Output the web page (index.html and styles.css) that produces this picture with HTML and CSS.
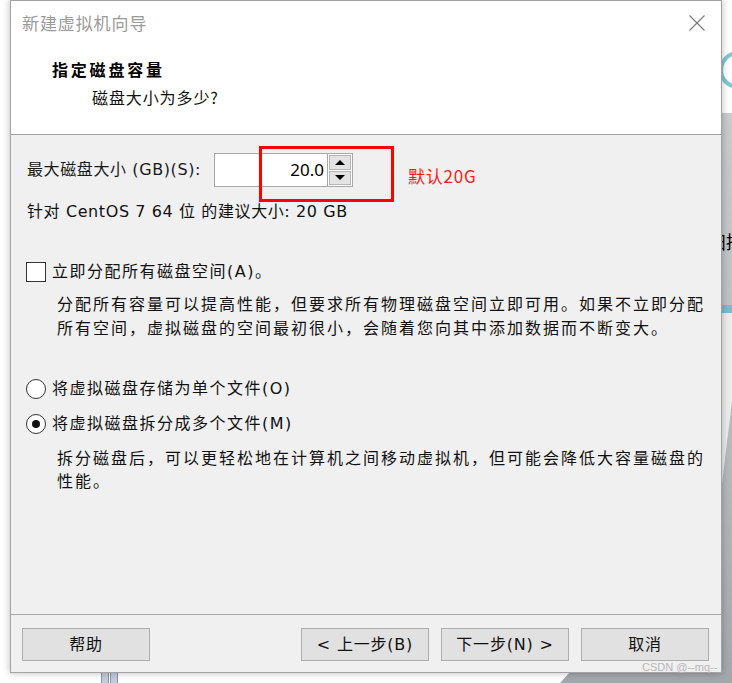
FILE: index.html
```html
<!DOCTYPE html>
<html lang="zh-CN">
<head>
<meta charset="utf-8">
<title>新建虚拟机向导</title>
<link rel="stylesheet" href="styles.css">
</head>
<body>
<div class="desktop">
  <div class="ring"></div>
  <div class="side-strip">
    <div class="side-band"></div>
    <div class="side-wedge"></div>
  </div>
  <div class="side-text">扫描</div>
  <div class="taskbar-bars"><span></span><span></span></div>
  <div class="corner-shade"></div>

  <div class="dialog">
    <header class="dlg-header">
      <div class="title-row">
        <span class="title">新建虚拟机向导</span>
        <svg class="close" width="16" height="16" viewBox="0 0 16 16"><path d="M0.5 0.5 L15.5 15.5 M15.5 0.5 L0.5 15.5" stroke="#7a7a7a" stroke-width="1.1" fill="none"/></svg>
      </div>
      <div class="heading">指定磁盘容量</div>
      <div class="subheading">磁盘大小为多少?</div>
    </header>

    <main class="dlg-body">
      <div class="size-row">
        <span class="size-label">最大磁盘大小 (GB)(S):</span>
        <div class="spin">
          <div class="spin-input">20.0</div>
          <div class="spin-btns">
            <div class="spin-btn"><span class="tri-up"></span></div>
            <div class="spin-btn"><span class="tri-down"></span></div>
          </div>
        </div>
        <span class="note">默认20G</span>
      </div>
      <div class="recommend">针对 CentOS 7 64 位 的建议大小: 20 GB</div>

      <div class="option check-row">
        <span class="checkbox"></span>
        <span class="opt-label">立即分配所有磁盘空间(A)。</span>
      </div>
      <p class="desc first-desc">分配所有容量可以提高性能，但要求所有物理磁盘空间立即可用。如果不立即分配<br>所有空间，虚拟磁盘的空间最初很小，会随着您向其中添加数据而不断变大。</p>

      <div class="option radio-row1">
        <span class="radio"></span>
        <span class="opt-label">将虚拟磁盘存储为单个文件(O)</span>
      </div>
      <div class="option radio-row2">
        <span class="radio checked"></span>
        <span class="opt-label">将虚拟磁盘拆分成多个文件(M)</span>
      </div>
      <p class="desc second-desc">拆分磁盘后，可以更轻松地在计算机之间移动虚拟机，但可能会降低大容量磁盘的<br>性能。</p>
    </main>

    <footer class="dlg-footer">
      <button class="btn">帮助</button>
      <div class="spacer"></div>
      <button class="btn">&lt; 上一步(B)</button>
      <button class="btn">下一步(N) &gt;</button>
      <button class="btn">取消</button>
    </footer>
  </div>

  <div class="redbox"></div>
  <div class="watermark">CSDN @--mq--</div>
</div>
</body>
</html>
```

FILE: styles.css
```css
html, body {
  margin: 0;
  padding: 0;
  background: #ffffff;
}

body {
  font-family: "DejaVu Sans", "Noto Sans CJK SC", sans-serif;
  color: #000;
}

.desktop {
  position: relative;
  width: 732px;
  height: 683px;
  overflow: hidden;
  background: #ffffff;
}

/* desktop decorations behind the dialog */
.ring {
  position: absolute;
  left: 719px;
  top: 51px;
  width: 30px;
  height: 30px;
  border: 4px solid #7ec6d6;
  border-radius: 50%;
}

.side-strip {
  position: absolute;
  left: 716px;
  top: 113px;
  width: 16px;
  height: 570px;
  background: linear-gradient(to bottom, #c9cbcd, #b6babd 60%, #a3a8ac);
}

.side-band {
  position: absolute;
  left: 0;
  top: 192px;
  width: 16px;
  height: 8px;
  background: #7fb9cc;
}

.side-wedge {
  position: absolute;
  left: 0;
  top: 200px;
  width: 16px;
  height: 220px;
  background: #ececec;
  clip-path: polygon(0 0, 100% 0, 100% 40%, 0 100%);
}

.side-text {
  position: absolute;
  left: 708px;
  top: 229px;
  white-space: nowrap;
  font-family: "Noto Sans CJK SC", sans-serif;
  font-size: 18px;
  line-height: 24px;
  color: #000;
}

.taskbar-bars {
  position: absolute;
  left: 101px;
  top: 672px;
  width: 17px;
  height: 11px;
  display: flex;
  gap: 1px;
}

.taskbar-bars span {
  flex: 1;
  background: #c3cbdb;
  border-left: 1px solid #8d95a5;
  border-right: 1px solid #8d95a5;
}

.corner-shade {
  position: absolute;
  left: 560px;
  top: 672px;
  width: 172px;
  height: 11px;
  background: #a2a7ac;
  clip-path: polygon(10px 0, 100% 0, 100% 100%, 0 100%);
}

/* dialog window */
.dialog {
  position: absolute;
  left: 10px;
  top: 0;
  width: 710px;
  height: 671px;
  border: 1px solid #a3a3a3;
  background: #f0f0f0;
  box-shadow: 0 0 7px rgba(0, 0, 0, 0.28);
  display: flex;
  flex-direction: column;
}

.dlg-header {
  height: 133px;
  background: #ffffff;
  border-bottom: 1px solid #a0a0a0;
  display: flex;
  flex-direction: column;
  box-sizing: content-box;
}

.title-row {
  display: flex;
  align-items: center;
  justify-content: space-between;
  height: 24px;
  margin-top: 10px;
  padding: 0 16px 0 11px;
}

.title {
  font-family: "Noto Sans CJK SC", sans-serif;
  font-size: 17px;
  letter-spacing: 0.9px;
  color: #9a9a9a;
  line-height: 24px;
}

.close {
  display: block;
}

.heading {
  margin-top: 22px;
  padding-left: 41px;
  font-family: "Noto Sans CJK SC", sans-serif;
  font-weight: bold;
  font-size: 16px;
  letter-spacing: 2.8px;
  line-height: 24px;
}

.subheading {
  margin-top: 4px;
  padding-left: 81px;
  font-family: "Noto Sans CJK SC", sans-serif;
  font-size: 16px;
  letter-spacing: 0.9px;
  line-height: 24px;
  color: #111;
}

.dlg-body {
  flex: 1;
  padding: 18px 16px 0 16px;
  display: flex;
  flex-direction: column;
  font-size: 16px;
}

.size-row {
  display: flex;
  align-items: center;
  height: 34px;
}

.size-label {
  width: 187px;
  white-space: nowrap;
  letter-spacing: 0.6px;
  line-height: 24px;
  color: #1a1a1a;
}

.spin {
  display: flex;
  height: 34px;
}

.spin-input {
  width: 109px;
  height: 32px;
  border: 1px solid #a8a8a8;
  border-right: none;
  background: #ffffff;
  text-align: right;
  padding-right: 3px;
  font-family: "Noto Sans", sans-serif;
  font-size: 17px;
  line-height: 31px;
}

.spin-btns {
  width: 26px;
  height: 34px;
  box-sizing: border-box;
  border: 1px solid #a8a8a8;
  background: #ffffff;
  padding: 1px;
  display: flex;
  flex-direction: column;
  gap: 1px;
}

.spin-btn {
  flex: 1;
  background: #e3e3e3;
  border: 1px solid #b5b5b5;
  display: flex;
  align-items: center;
  justify-content: center;
}

.tri-up {
  width: 0;
  height: 0;
  border-left: 5px solid transparent;
  border-right: 5px solid transparent;
  border-bottom: 5px solid #000;
}

.tri-down {
  width: 0;
  height: 0;
  border-left: 5px solid transparent;
  border-right: 5px solid transparent;
  border-top: 5px solid #000;
}

.note {
  margin-left: 55px;
  margin-top: 12px;
  font-family: "Noto Sans CJK SC", sans-serif;
  color: #ff1a1a;
  font-size: 17px;
  letter-spacing: 0.8px;
  line-height: 20px;
}

.recommend {
  margin-top: 13px;
  white-space: nowrap;
  letter-spacing: 0.6px;
  line-height: 24px;
  color: #111;
}

.option {
  display: flex;
  align-items: center;
  height: 24px;
}

.check-row { margin-top: 36px; }
.radio-row1 { margin-top: 38px; }
.radio-row2 { margin-top: 11px; }

.checkbox {
  width: 18px;
  height: 18px;
  margin-left: -1px;
  border: 1px solid #333;
  background: #fff;
}

.radio {
  position: relative;
  width: 18px;
  height: 18px;
  margin-left: -1px;
  border: 1px solid #333;
  border-radius: 50%;
  background: #fff;
}

.radio.checked::after {
  content: "";
  position: absolute;
  left: 5px;
  top: 5px;
  width: 8px;
  height: 8px;
  border-radius: 50%;
  background: #111;
}

.opt-label {
  margin-left: 6px;
  letter-spacing: 1.5px;
  line-height: 24px;
  color: #111;
}

.desc {
  margin: 0;
  padding-left: 30px;
  font-family: "Noto Sans CJK SC", sans-serif;
  font-size: 16px;
  letter-spacing: 2px;
  line-height: 24px;
  color: #111;
  white-space: nowrap;
}

.first-desc { margin-top: 7px; }
.second-desc { margin-top: 10px; line-height: 23px; }

.dlg-footer {
  height: 58px;
  border-top: 1px solid #a8a8a8;
  display: flex;
  align-items: flex-start;
  gap: 12px;
  padding: 13px 12px 0 11px;
  box-sizing: border-box;
  background: #f0f0f0;
}

.spacer {
  flex: 1;
}

.btn {
  width: 128px;
  height: 33px;
  margin: 0;
  padding: 0;
  border: 1px solid #adadad;
  background: #e1e1e1;
  font-family: "DejaVu Sans", "Noto Sans CJK SC", sans-serif;
  font-size: 16px;
  letter-spacing: 0.8px;
  color: #111;
  line-height: 31px;
}

/* annotation overlay */
.redbox {
  position: absolute;
  left: 259px;
  top: 146px;
  width: 129px;
  height: 50px;
  border: 3px solid #ff0000;
}

.watermark {
  position: absolute;
  left: 642px;
  top: 661px;
  font-family: "Liberation Sans", sans-serif;
  font-size: 11px;
  line-height: 12px;
  color: #b8b8b8;
}
```
